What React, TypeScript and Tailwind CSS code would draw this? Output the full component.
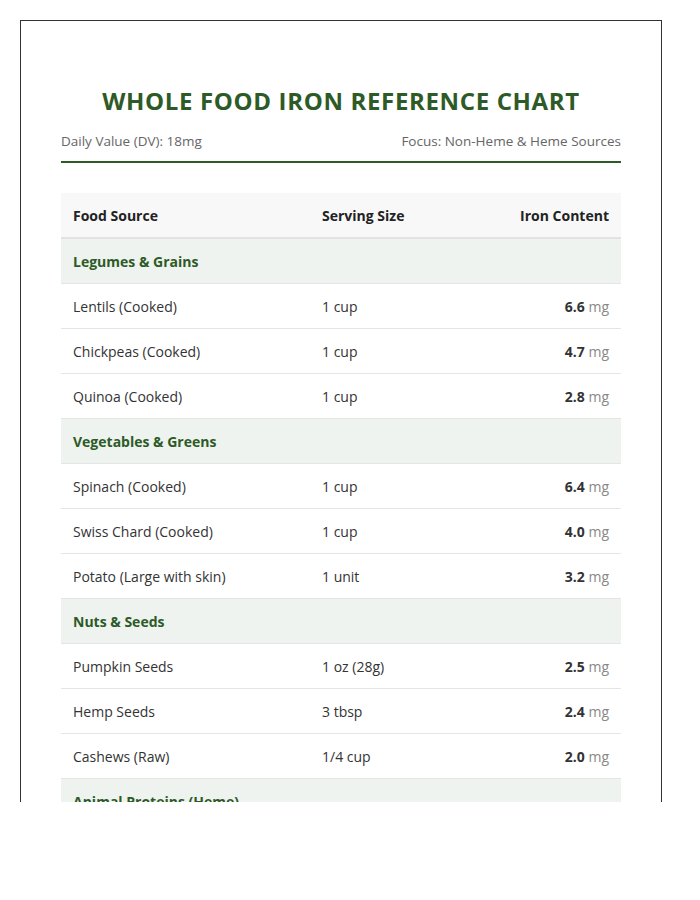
import React from "react";

type Row = { name: string; serving: string; iron: string };
type Group = { title: string; rows: Row[] };

const groups: Group[] = [
  {
    title: "Legumes & Grains",
    rows: [
      { name: "Lentils (Cooked)", serving: "1 cup", iron: "6.6" },
      { name: "Chickpeas (Cooked)", serving: "1 cup", iron: "4.7" },
      { name: "Quinoa (Cooked)", serving: "1 cup", iron: "2.8" },
    ],
  },
  {
    title: "Vegetables & Greens",
    rows: [
      { name: "Spinach (Cooked)", serving: "1 cup", iron: "6.4" },
      { name: "Swiss Chard (Cooked)", serving: "1 cup", iron: "4.0" },
      { name: "Potato (Large with skin)", serving: "1 unit", iron: "3.2" },
    ],
  },
  {
    title: "Nuts & Seeds",
    rows: [
      { name: "Pumpkin Seeds", serving: "1 oz (28g)", iron: "2.5" },
      { name: "Hemp Seeds", serving: "3 tbsp", iron: "2.4" },
      { name: "Cashews (Raw)", serving: "1/4 cup", iron: "2.0" },
    ],
  },
  {
    title: "Animal Proteins (Heme)",
    rows: [],
  },
];

export default function App() {
  return (
    <div
      className="h-[802px] overflow-hidden bg-white p-5"
      style={{ fontFamily: '"Open Sans", "Noto Sans", sans-serif' }}
    >
      <div className="w-[642px] border border-[#333] px-10 pt-10 pb-10">
        <h1 className="mt-[24px] text-center text-[24px] font-bold leading-[32px] tracking-[0.65px] text-[#2d5a27]">
          WHOLE FOOD IRON REFERENCE CHART
        </h1>
        <div className="mt-[14px] flex items-center justify-between border-b-2 border-[#2d5a27] pb-[10px] text-[13.5px] leading-[20px] text-[#666]">
          <span>Daily Value (DV): 18mg</span>
          <span>Focus: Non-Heme &amp; Heme Sources</span>
        </div>
        <div className="mt-[30px] text-[14px] text-[#333]">
          <div className="grid h-[46px] grid-cols-[249px_1fr_160px] items-center border-b-2 border-[#e2e2e2] bg-[#f8f8f8] px-3 font-bold text-[#222]">
            <div>Food Source</div>
            <div>Serving Size</div>
            <div className="text-right">Iron Content</div>
          </div>
          {groups.map((g) => (
            <React.Fragment key={g.title}>
              <div className="flex h-[45px] items-center border-b border-[#e5e5e5] bg-[#eef3ef] px-3 font-bold text-[#2d5a27]">
                {g.title}
              </div>
              {g.rows.map((r) => (
                <div
                  key={r.name}
                  className="grid h-[45px] grid-cols-[249px_1fr_160px] items-center border-b border-[#e5e5e5] px-3"
                >
                  <div>{r.name}</div>
                  <div>{r.serving}</div>
                  <div className="text-right">
                    <span className="font-bold">{r.iron}</span>{" "}
                    <span className="text-[#888]">mg</span>
                  </div>
                </div>
              ))}
            </React.Fragment>
          ))}
        </div>
      </div>
    </div>
  );
}
